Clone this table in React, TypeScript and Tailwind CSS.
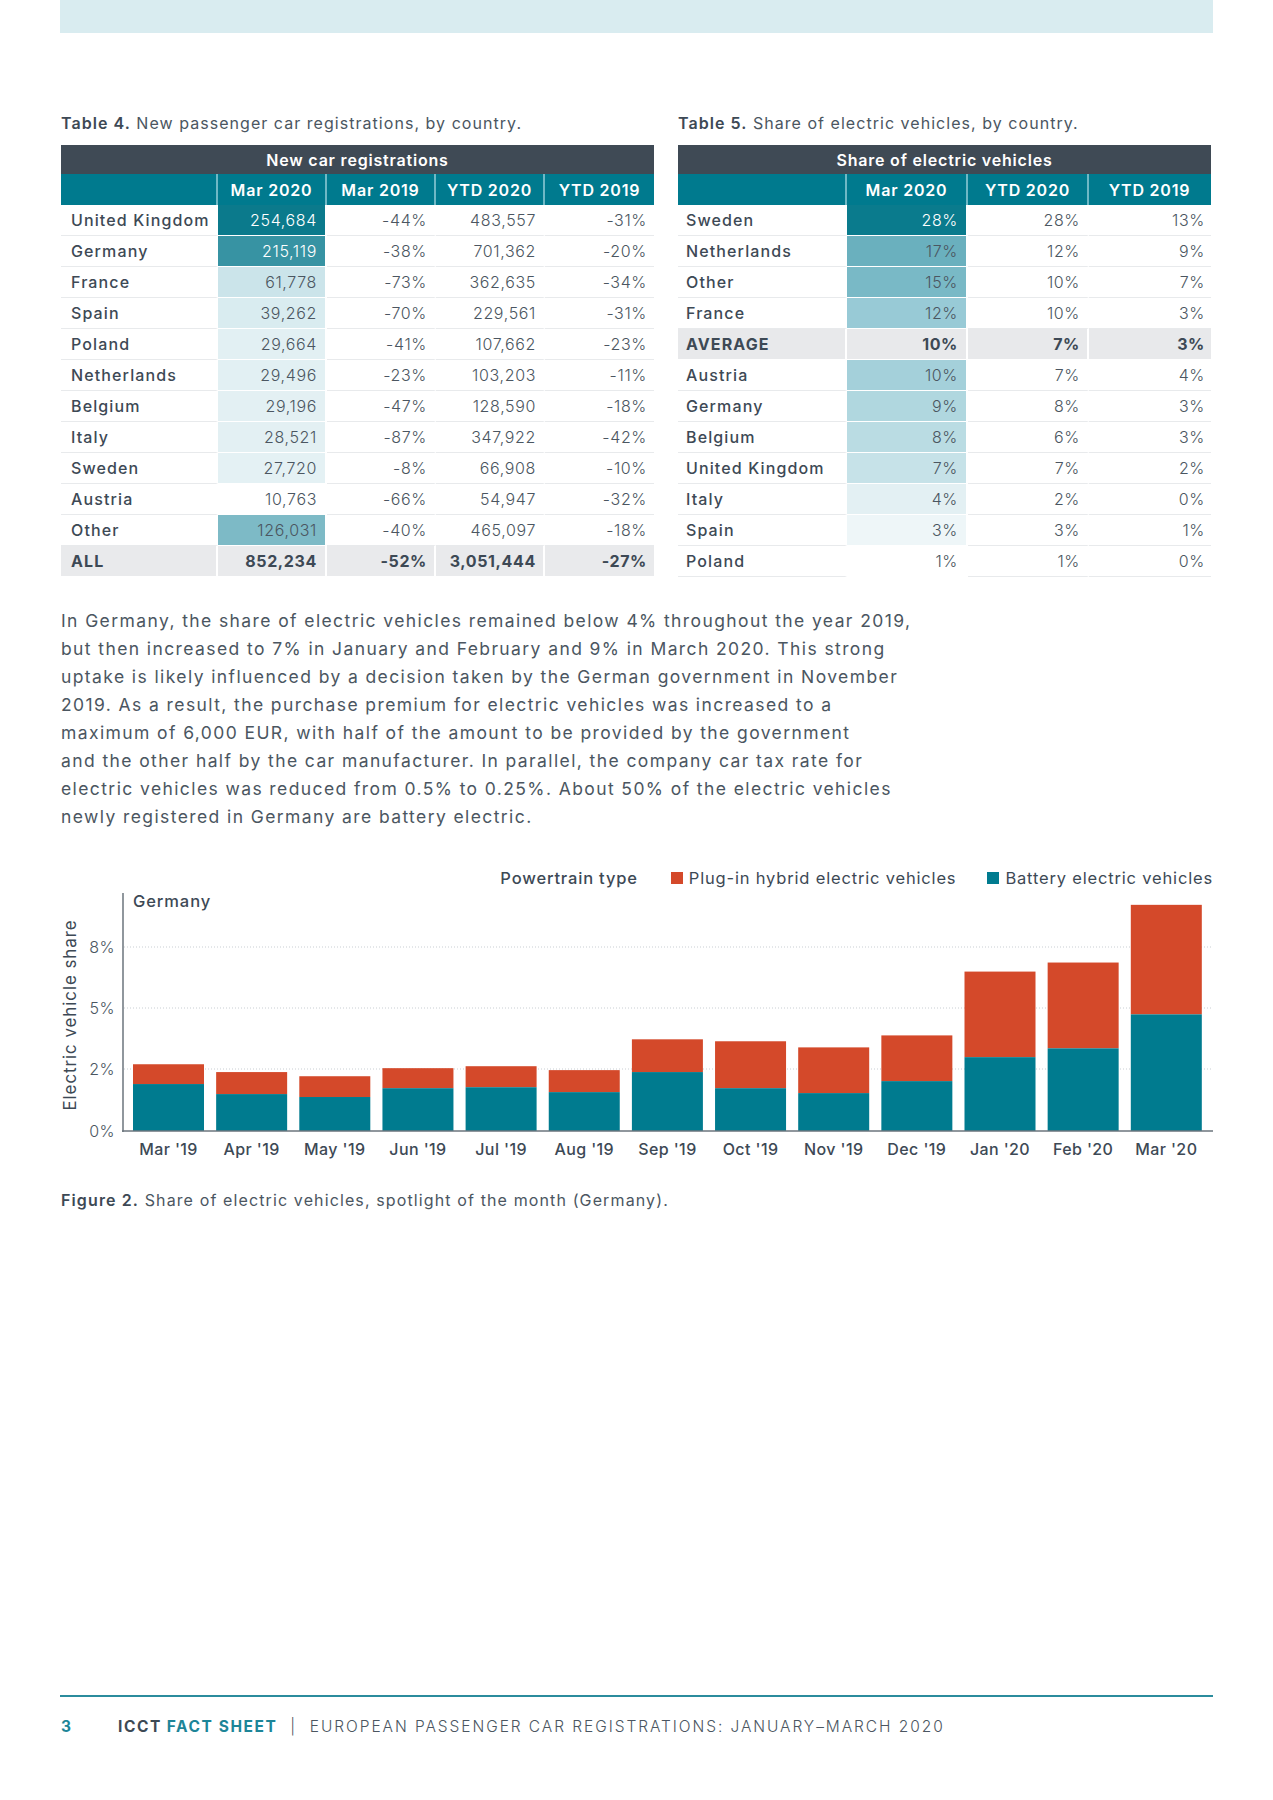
import React from 'react'

const FONT = "font-['Inter','Liberation_Sans',sans-serif]"

type Row4 = { name: string; m20: string; m19: string; y20: string; y19: string; bg: string; fg?: string; total?: boolean }

const table4: Row4[] = [
  { name: 'United Kingdom', m20: '254,684', m19: '-44%', y20: '483,557', y19: '-31%', bg: 'bg-[#0b7a8c]', fg: 'text-white' },
  { name: 'Germany', m20: '215,119', m19: '-38%', y20: '701,362', y19: '-20%', bg: 'bg-[#3793a3]', fg: 'text-white' },
  { name: 'France', m20: '61,778', m19: '-73%', y20: '362,635', y19: '-34%', bg: 'bg-[#cbe4ea]' },
  { name: 'Spain', m20: '39,262', m19: '-70%', y20: '229,561', y19: '-31%', bg: 'bg-[#d9ecf0]' },
  { name: 'Poland', m20: '29,664', m19: '-41%', y20: '107,662', y19: '-23%', bg: 'bg-[#e2f0f3]' },
  { name: 'Netherlands', m20: '29,496', m19: '-23%', y20: '103,203', y19: '-11%', bg: 'bg-[#e2f0f3]' },
  { name: 'Belgium', m20: '29,196', m19: '-47%', y20: '128,590', y19: '-18%', bg: 'bg-[#e3f0f3]' },
  { name: 'Italy', m20: '28,521', m19: '-87%', y20: '347,922', y19: '-42%', bg: 'bg-[#e3f0f3]' },
  { name: 'Sweden', m20: '27,720', m19: '-8%', y20: '66,908', y19: '-10%', bg: 'bg-[#e4f1f4]' },
  { name: 'Austria', m20: '10,763', m19: '-66%', y20: '54,947', y19: '-32%', bg: 'bg-white' },
  { name: 'Other', m20: '126,031', m19: '-40%', y20: '465,097', y19: '-18%', bg: 'bg-[#7dbac6]' },
  { name: 'ALL', m20: '852,234', m19: '-52%', y20: '3,051,444', y19: '-27%', bg: 'bg-[#e9eaec]', total: true },
]

type Row5 = { name: string; m20: string; y20: string; y19: string; bg: string; fg?: string; total?: boolean }

const table5: Row5[] = [
  { name: 'Sweden', m20: '28%', y20: '28%', y19: '13%', bg: 'bg-[#0a7b8d]', fg: 'text-white' },
  { name: 'Netherlands', m20: '17%', y20: '12%', y19: '9%', bg: 'bg-[#6ab0be]' },
  { name: 'Other', m20: '15%', y20: '10%', y19: '7%', bg: 'bg-[#79b9c6]' },
  { name: 'France', m20: '12%', y20: '10%', y19: '3%', bg: 'bg-[#98cad6]' },
  { name: 'AVERAGE', m20: '10%', y20: '7%', y19: '3%', bg: 'bg-[#e8e9eb]', total: true },
  { name: 'Austria', m20: '10%', y20: '7%', y19: '4%', bg: 'bg-[#a4d0da]' },
  { name: 'Germany', m20: '9%', y20: '8%', y19: '3%', bg: 'bg-[#b0d7df]' },
  { name: 'Belgium', m20: '8%', y20: '6%', y19: '3%', bg: 'bg-[#badce3]' },
  { name: 'United Kingdom', m20: '7%', y20: '7%', y19: '2%', bg: 'bg-[#c6e2e8]' },
  { name: 'Italy', m20: '4%', y20: '2%', y19: '0%', bg: 'bg-[#e3f0f3]' },
  { name: 'Spain', m20: '3%', y20: '3%', y19: '1%', bg: 'bg-[#eef6f8]' },
  { name: 'Poland', m20: '1%', y20: '1%', y19: '0%', bg: 'bg-white' },
]

// bar values in % share (bev, total)
const months = [
  { m: "Mar '19", bev: 1.92, tot: 2.73 },
  { m: "Apr '19", bev: 1.51, tot: 2.41 },
  { m: "May '19", bev: 1.39, tot: 2.24 },
  { m: "Jun '19", bev: 1.75, tot: 2.57 },
  { m: "Jul '19", bev: 1.79, tot: 2.65 },
  { m: "Aug '19", bev: 1.59, tot: 2.49 },
  { m: "Sep '19", bev: 2.41, tot: 3.75 },
  { m: "Oct '19", bev: 1.75, tot: 3.67 },
  { m: "Nov '19", bev: 1.55, tot: 3.42 },
  { m: "Dec '19", bev: 2.04, tot: 3.91 },
  { m: "Jan '20", bev: 3.02, tot: 6.52 },
  { m: "Feb '20", bev: 3.38, tot: 6.89 },
  { m: "Mar '20", bev: 4.77, tot: 9.25 },
]

function Caption({ label, text }: { label: string; text: string }) {
  return (
    <div className="text-[16px] leading-[20px] tracking-[0.065em] text-[#4b5661] mb-[12px]">
      <span className="font-semibold text-[#3d4955]">{label}</span> {text}
    </div>
  )
}

function Table4() {
  const cols = ['Mar 2020', 'Mar 2019', 'YTD 2020', 'YTD 2019']
  return (
    <div className="w-[593px]">
      <Caption label="Table 4." text="New passenger car registrations, by country." />
      <div className="h-[29px] bg-[#3f4a55] text-white font-semibold text-[16px] tracking-[0.05em] flex items-center justify-center">
        New car registrations
      </div>
      <div className="flex h-[31px] bg-[#007a8e] text-white font-semibold text-[16px] tracking-[0.05em]">
        <div className="w-[157px] border-r-2 border-[#6fb8c5]" />
        {cols.map((c, i) => (
          <div key={c} className={`w-[109px] flex items-center justify-center ${i < 3 ? 'border-r-2 border-[#6fb8c5]' : ''}`}>
            {c}
          </div>
        ))}
      </div>
      {table4.map((r) => {
        const rowBg = r.total ? 'bg-[#e9eaec]' : 'bg-white'
        const line = r.total ? 'border-white' : 'border-[#e8eaec]'
        const wt = r.total ? 'font-bold text-[#3d4955]' : 'font-light text-[#4b5661]'
        return (
          <div key={r.name} className="flex h-[31px] text-[16px] tracking-[0.04em]">
            <div className={`w-[157px] pl-[10px] flex items-center border-b ${line} ${rowBg} ${r.total ? 'font-bold' : 'font-medium'} text-[#3d4955] border-r-2 border-r-white tracking-[0.07em]`}>
              {r.name}
            </div>
            <div className={`w-[109px] pr-[8px] flex items-center justify-end border-b border-b-white border-r-2 border-r-white ${r.bg} ${r.fg ? r.fg + ' font-light' : wt}`}>
              {r.m20}
            </div>
            <div className={`w-[109px] pr-[7px] flex items-center justify-end border-b ${line} border-r-2 border-r-white ${rowBg} ${wt}`}>{r.m19}</div>
            <div className={`w-[109px] pr-[7px] flex items-center justify-end border-b ${line} border-r-2 border-r-white ${rowBg} ${wt}`}>{r.y20}</div>
            <div className={`w-[109px] pr-[7px] flex items-center justify-end border-b ${line} ${rowBg} ${wt}`}>{r.y19}</div>
          </div>
        )
      })}
    </div>
  )
}

function Table5() {
  const cols = ['Mar 2020', 'YTD 2020', 'YTD 2019']
  return (
    <div className="w-[533px]">
      <Caption label="Table 5." text="Share of electric vehicles, by country." />
      <div className="h-[29px] bg-[#3f4a55] text-white font-semibold text-[16px] tracking-[0.05em] flex items-center justify-center">
        Share of electric vehicles
      </div>
      <div className="flex h-[31px] bg-[#007a8e] text-white font-semibold text-[16px] tracking-[0.05em]">
        <div className="w-[169px] border-r-2 border-[#6fb8c5]" />
        {cols.map((c, i) => (
          <div key={c} className={`w-[121px] flex items-center justify-center ${i < 2 ? 'border-r-2 border-[#6fb8c5]' : ''}`}>
            {c}
          </div>
        ))}
      </div>
      {table5.map((r) => {
        const rowBg = r.total ? 'bg-[#e8e9eb]' : 'bg-white'
        const line = r.total ? 'border-white' : 'border-[#e8eaec]'
        const wt = r.total ? 'font-bold text-[#3d4955]' : 'font-light text-[#4b5661]'
        return (
          <div key={r.name} className="flex h-[31px] text-[16px] tracking-[0.04em]">
            <div className={`w-[169px] pl-[8px] flex items-center border-b ${line} ${rowBg} ${r.total ? 'font-bold' : 'font-medium'} text-[#3d4955] border-r-2 border-r-white tracking-[0.07em]`}>
              {r.name}
            </div>
            <div className={`w-[121px] pr-[8px] flex items-center justify-end border-b border-b-white border-r-2 border-r-white ${r.bg} ${r.fg ? r.fg + ' font-light' : wt}`}>
              {r.m20}
            </div>
            <div className={`w-[121px] pr-[7px] flex items-center justify-end border-b ${line} border-r-2 border-r-white ${rowBg} ${wt}`}>{r.y20}</div>
            <div className={`w-[122px] pr-[6px] flex items-center justify-end border-b ${line} ${rowBg} ${wt}`}>{r.y19}</div>
          </div>
        )
      })}
    </div>
  )
}

function Chart() {
  const zero = 243
  const pxPer = 24.45
  const ticks = [
    { l: '8%', y: 59 },
    { l: '5%', y: 120 },
    { l: '2%', y: 181 },
    { l: '0%', y: 243 },
  ]
  return (
    <svg width="1153" height="275" className="block overflow-visible">
      {ticks.slice(0, 3).map((t) => (
        <line key={t.l} x1="64" x2="1153" y1={t.y} y2={t.y} stroke="#c9ced3" strokeWidth="1" strokeDasharray="1 2" />
      ))}
      {ticks.map((t) => (
        <text key={t.l} x="55" y={t.y + 6} textAnchor="end" fontSize="16" fontWeight="300" fill="#4b5661" letterSpacing="0.5">
          {t.l}
        </text>
      ))}
      <text x="0" y="0" transform="translate(16 127) rotate(-90)" textAnchor="middle" fontSize="17" fontWeight="400" fill="#3d4955" letterSpacing="0.9">
        Electric vehicle share
      </text>
      <text x="73" y="19" fontSize="16.5" fontWeight="500" fill="#3d4955" letterSpacing="0.9">Germany</text>
      {months.map((d, i) => {
        const x = 73 + i * 83.15
        const hb = d.bev * pxPer
        const ht = d.tot * pxPer
        return (
          <g key={d.m}>
            <rect x={x} y={zero - ht} width="71" height={ht - hb} fill="#d4492a" />
            <rect x={x} y={zero - hb} width="71" height={hb} fill="#007b8f" />
            <text x={x + 35.5} y="267" textAnchor="middle" fontSize="16" fontWeight="500" fill="#3d4955" letterSpacing="0.4">
              {d.m}
            </text>
          </g>
        )
      })}
      <line x1="63" x2="63" y1="5" y2={zero + 1} stroke="#6b747c" strokeWidth="1.5" />
      <line x1="62" x2="1153" y1={zero} y2={zero} stroke="#6b747c" strokeWidth="1.5" />
    </svg>
  )
}

export default function App() {
  return (
    <div className={`w-[1273px] h-[1800px] bg-white flex flex-col ${FONT} antialiased`}>
      <div className="mx-[60px] h-[33px] bg-[#d9ecf0]" />

      <div className="flex gap-[24px] pl-[61px] mt-[80px]">
        <Table4 />
        <Table5 />
      </div>

      <p className="pl-[61px] mt-[30px] text-[17.5px] leading-[28px] tracking-[0.08em] text-[#4b5661]">
        In Germany, the share of electric vehicles remained below 4% throughout the year 2019,<br />
        but then increased to 7% in January and February and 9% in March 2020. This strong<br />
        uptake is likely influenced by a decision taken by the German government in November<br />
        2019. As a result, the purchase premium for electric vehicles was increased to a<br />
        maximum of 6,000 EUR, with half of the amount to be provided by the government<br />
        and the other half by the car manufacturer. In parallel, the company car tax rate for<br />
        electric vehicles was reduced from 0.5% to 0.25%. About 50% of the electric vehicles<br />
        newly registered in Germany are battery electric.
      </p>

      <div className="mt-[37px] flex justify-end items-center pr-[60px] h-[20px] text-[16.5px] tracking-[0.05em] text-[#3d4955]">
        <span className="font-medium mr-[33px]">Powertrain type</span>
        <span className="w-[12px] h-[12px] bg-[#d4492a] mr-[6px]" />
        <span className="mr-[31px]">Plug-in hybrid electric vehicles</span>
        <span className="w-[12px] h-[12px] bg-[#007b8f] mr-[6px]" />
        <span>Battery electric vehicles</span>
      </div>

      <div className="pl-[60px]">
        <Chart />
      </div>

      <div className="pl-[61px] mt-[27px] text-[16px] leading-[20px] tracking-[0.07em] text-[#4b5661]">
        <span className="font-semibold text-[#3d4955]">Figure 2.</span> Share of electric vehicles, spotlight of the month (Germany).
      </div>

      <div className="mt-auto mx-[60px] border-t-2 border-[#2b8c9d]" />
      <div className="mx-[61px] mt-[20px] mb-[63px] flex items-center text-[15.5px] leading-[20px] tracking-[0.1em]">
        <span className="font-bold text-[#1d8598] w-[57px]">3</span>
        <span className="font-bold text-[#3d4955]">ICCT</span>
        <span className="font-bold text-[#1d8598] ml-[5px]">FACT SHEET</span>
        <span className="text-[#4b5661] font-light mx-[13px]">|</span>
        <span className="text-[#4b5661] font-light tracking-[0.125em]">EUROPEAN PASSENGER CAR REGISTRATIONS: JANUARY–MARCH 2020</span>
      </div>
    </div>
  )
}
